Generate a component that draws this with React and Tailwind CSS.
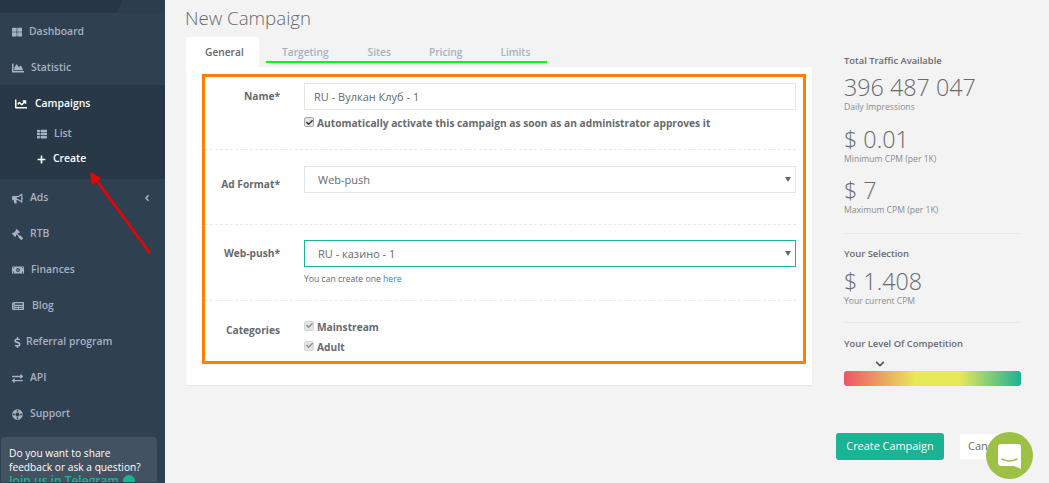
import React from 'react';
import {
  FaThLarge, FaChartArea, FaChartLine, FaThList, FaPlus, FaBullhorn, FaGavel,
  FaMoneyBillAlt, FaNewspaper, FaDollarSign, FaExchangeAlt, FaLifeRing, FaAngleLeft,
  FaCheck, FaChevronDown,
} from 'react-icons/fa';

const topItems = [
  { icon: FaThLarge, label: 'Dashboard', size: 10, gap: 'gap-[7px]' },
  { icon: FaChartArea, label: 'Statistic', size: 12, gap: 'gap-[7px]' },
];

const bottomItems = [
  { icon: FaBullhorn, label: 'Ads', size: 11, gap: 'gap-[7px]', arrow: true },
  { icon: FaGavel, label: 'RTB', size: 11, gap: 'gap-[7px]', iconClass: '-scale-x-100' },
  { icon: FaMoneyBillAlt, label: 'Finances', size: 12, gap: 'gap-[7px]' },
  { icon: FaNewspaper, label: 'Blog', size: 12, gap: 'gap-2' },
  { icon: FaDollarSign, label: 'Referral program', size: 11, gap: 'gap-[3px]' },
  { icon: FaExchangeAlt, label: 'API', size: 11, gap: 'gap-[7px]' },
  { icon: FaLifeRing, label: 'Support', size: 11, gap: 'gap-[7px]', iconClass: 'rotate-45' },
];

function NavItem({ item }) {
  const Icon = item.icon;
  return (
    <div className={`h-9 shrink-0 pt-[2px] pl-3 pr-[13px] flex items-center ${item.gap} text-[#a7b1c2]`}>
      <Icon size={item.size} className={`shrink-0 ${item.iconClass || ''}`} />
      <span className="flex-1">{item.label}</span>
      {item.arrow && <FaAngleLeft size={10} />}
    </div>
  );
}

function Sidebar() {
  return (
    <aside className="w-[165px] shrink-0 bg-[#2f4050] text-[10.4px] font-semibold flex flex-col overflow-hidden">
      <div className="h-[13px] shrink-0 bg-[linear-gradient(115deg,#263645_72%,#2c3d4c_72%)]" />
      {topItems.map((item) => <NavItem key={item.label} item={item} />)}

      <div className="h-[94px] shrink-0 bg-[#293846]">
        <div className="h-[37px] pl-[15px] flex items-center gap-2 text-white">
          <FaChartLine size={12} />
          <span>Campaigns</span>
        </div>
        <div className="h-[24px] pl-[37px] flex items-center gap-[7px] text-[#a7b1c2]">
          <FaThList size={10} />
          <span>List</span>
        </div>
        <div className="h-[26px] pl-[37px] flex items-center gap-[7px] text-white">
          <FaPlus size={9} />
          <span>Create</span>
        </div>
      </div>

      {bottomItems.map((item) => <NavItem key={item.label} item={item} />)}

      <div className="mt-[6px] ml-[1px] w-[156px] h-[45px] shrink-0 rounded-t bg-[#435261] px-2 pt-[9px] text-[10.2px] leading-[14px] font-normal text-white overflow-hidden">
        <p>Do you want to share feedback or ask a question?</p>
        <p className="font-semibold text-[#1ab394] text-[12px] flex items-center gap-1">
          Join us in Telegram
          <span className="inline-block w-3 h-3 rounded-full bg-[#1ab394]" />
        </p>
      </div>
    </aside>
  );
}

function Checkbox({ muted }) {
  return (
    <span className={`-mt-[3px] w-[10px] h-[10px] rounded-[2px] flex items-center justify-center shrink-0 border ${muted ? 'bg-[#e4e4e4] border-[#d6d6d6] text-[#8f8f8f]' : 'bg-[#e4e4e4] border-[#a8a8a8] text-[#333]'}`}>
      <FaCheck size={7} />
    </span>
  );
}

function SelectBox({ value, active }) {
  return (
    <div className={`h-[27px] pl-[13px] pr-[4px] flex items-center justify-between bg-white text-[11px] text-[#676a6c] border ${active ? 'border-[#1ab394]' : 'border-[#e5e6e7]'}`}>
      <span className="pt-px">{value}</span>
      <svg width="6" height="5" viewBox="0 0 6 5"><path d="M0 0 H6 L3 5 Z" fill="#666" /></svg>
    </div>
  );
}

function FormRow({ label, labelClass, height, last, children }) {
  return (
    <div className={`flex ${height} ${last ? '' : 'border-b border-dashed border-[#e7eaec]'}`}>
      <div className={`w-[75px] text-right font-bold text-[10.2px] leading-[14px] text-[#676a6c] shrink-0 ${labelClass}`}>{label}</div>
      <div className="ml-[24px] flex-1">{children}</div>
    </div>
  );
}

function CampaignForm() {
  return (
    <div className="w-[626px] shrink-0">
      <h1 className="h-[37px] pt-[5px] -ml-[1px] text-[18.7px] leading-[26px] font-light text-[#676a6c]">New Campaign</h1>

      <div className="h-[30px] flex text-[10.2px] font-semibold">
        <div className="w-[73px] bg-white rounded-t-[2px] pl-[19px] pt-[7px] leading-[16px] text-[#676a6c]">General</div>
        <div className="flex pt-[7px] leading-[16px] text-[#a7b1c2]">
          <span className="ml-[23px]">Targeting</span>
          <span className="ml-[39px]">Sites</span>
          <span className="ml-[38px]">Pricing</span>
          <span className="ml-[38px]">Limits</span>
        </div>
      </div>

      <div className="h-[318px] bg-white pt-[7px] pl-4 pr-[6px] shadow-[0_1px_1px_rgba(0,0,0,0.05)]">
        <div className="h-[290px] border-[3px] border-[#ff8000] pr-[7px]">
          <FormRow label="Name*" labelClass="pt-[12px]" height="h-[73px]">
            <input
              readOnly
              value="RU - Вулкан Клуб - 1"
              className="mt-[6px] w-full h-[27px] px-[9px] border border-[#e5e6e7] bg-white text-[11px] text-[#676a6c] outline-none"
            />
            <label className="mt-[6px] flex items-center gap-[3px] font-bold text-[10.2px] text-[#676a6c]">
              <Checkbox />
              Automatically activate this campaign as soon as an administrator approves it
            </label>
          </FormRow>

          <FormRow label="Ad Format*" labelClass="pt-[27px]" height="h-[75px]">
            <div className="pt-[16px]"><SelectBox value="Web-push" /></div>
          </FormRow>

          <FormRow label="Web-push*" labelClass="pt-[21px]" height="h-[76px]">
            <div className="pt-[15px]"><SelectBox value="RU - казино - 1" active /></div>
            <p className="mt-[6px] text-[8.65px] leading-[12px] text-[#676a6c]">
              You can create one <span className="text-[#3f7fc4]">here</span>
            </p>
          </FormRow>

          <FormRow label="Categories" labelClass="pt-[22px]" height="h-[60px]" last>
            <div className="pt-[19px] flex flex-col gap-[6px] font-bold text-[10.2px] leading-[14px] text-[#676a6c]">
              <label className="flex items-center gap-[3px]"><Checkbox muted />Mainstream</label>
              <label className="flex items-center gap-[3px]"><Checkbox muted />Adult</label>
            </div>
          </FormRow>
        </div>
      </div>
    </div>
  );
}

function Stat({ value, caption, className }) {
  return (
    <div className={className}>
      <div className="text-[23.3px] leading-[28px] font-light text-[#676a6c]">{value}</div>
      <div className="text-[8.6px] leading-[13px] text-[#8a8c8e]">{caption}</div>
    </div>
  );
}

function TrafficPanel() {
  return (
    <div className="ml-[32px] w-[177px] shrink-0 pt-[54px]">
      <h3 className="text-[9.4px] leading-[14px] font-semibold text-[#676a6c]">Total Traffic Available</h3>
      <Stat value="396 487 047" caption="Daily Impressions" className="mt-[5px]" />
      <Stat value="$ 0.01" caption="Minimum CPM (per 1K)" className="mt-[11px]" />
      <Stat value="$ 7" caption="Maximum CPM (per 1K)" className="mt-[10px]" />

      <div className="mt-[16px] border-t border-[#e7eaec] pt-[13px]">
        <h3 className="text-[9.4px] leading-[14px] font-semibold text-[#676a6c]">Your Selection</h3>
        <Stat value="$ 1.408" caption="Your current CPM" className="mt-[6px]" />
      </div>

      <div className="mt-[14px] border-t border-[#e7eaec] pt-[14px]">
        <h3 className="text-[9.4px] leading-[14px] font-semibold text-[#676a6c]">Your Level Of Competition</h3>
        <div className="mt-[8px] h-[12px] pl-[31px] text-[#555]"><FaChevronDown size={10} /></div>
        <div className="h-[15px] rounded-[3px] bg-[linear-gradient(to_right,#ed5565,#e9e75a_40%,#e9e75a_65%,#1ab394)]" />
      </div>

      <div className="mt-[47px] -ml-2 flex items-start">
        <button className="w-[108px] h-[27px] rounded-[3px] bg-[#1ab394] text-white text-[10.9px] font-normal shrink-0">Create Campaign</button>
        <button className="ml-4 mt-px w-[60px] h-[25px] bg-white text-[11px] text-[#676a6c] shrink-0 text-left pl-2">Cancel</button>
      </div>
    </div>
  );
}

export default function App() {
  return (
    <div className="relative w-[1049px] h-[483px] overflow-hidden flex bg-[#f3f3f4] font-['Open_Sans',sans-serif]">
      <Sidebar />
      <main className="flex-1 pl-[21px] flex items-start">
        <CampaignForm />
        <TrafficPanel />
      </main>

      {/* annotations drawn over the shot */}
      <div className="absolute left-[266px] top-[61px] w-[281px] h-[2px] bg-[#00ff00]" />
      <svg className="absolute left-[80px] top-[165px]" width="80" height="95" viewBox="0 0 80 95" fill="none">
        <path d="M70 88 L14 12" stroke="#f00000" strokeWidth="2.5" />
        <path d="M10 7 L21 13 L12 20 Z" fill="#f00000" />
      </svg>

      {/* chat widget */}
      <div className="absolute left-[986px] top-[432px] w-[47px] h-[47px] rounded-full bg-[#9dc144] flex items-center justify-center">
        <svg width="23" height="25" viewBox="0 0 23 25" className="mt-[2px]">
          <path d="M3 0 H20 a3 3 0 0 1 3 3 V25 L16 22 H3 a3 3 0 0 1 -3 -3 V3 a3 3 0 0 1 3 -3 Z" fill="#fff" />
          <path d="M4 15 Q11.5 19 19 15" stroke="#9dc144" strokeWidth="1.5" fill="none" strokeLinecap="round" />
        </svg>
      </div>
    </div>
  );
}
